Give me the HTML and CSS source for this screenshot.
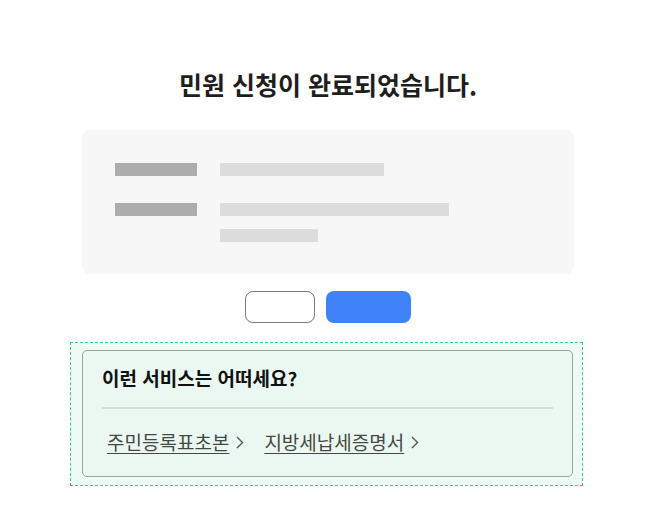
FILE: index.html
```html
<!DOCTYPE html>
<html lang="ko">
<head>
  <meta charset="UTF-8" />
  <meta name="viewport" content="width=device-width, initial-scale=1.0" />
  <title>민원 신청 완료</title>
  <link rel="stylesheet" href="styles.css">
</head>
<body>
  <div class="pagina">
    <h1 class="titulo">민원 신청이 완료되었습니다.</h1>

    <div class="resumo">
      <div class="linha">
        <span class="rotulo"></span>
        <div class="valores">
          <span class="valor v1"></span>
        </div>
      </div>
      <div class="linha">
        <span class="rotulo"></span>
        <div class="valores">
          <span class="valor v2"></span>
          <span class="valor v3"></span>
        </div>
      </div>
    </div>

    <div class="botoes">
      <button class="btn-linha"></button>
      <button class="btn-azul"></button>
    </div>

    <!-- área recomendada -->
    <div class="destaque">
      <div class="servicos">
        <h2>이런 서비스는 어떠세요?</h2>
        <div class="links">
          <a href="#">주민등록표초본</a>
          <svg class="seta" width="8" height="13" viewBox="0 0 8 13"><path d="M1 1l5.5 5.5L1 12" fill="none" stroke="#555" stroke-width="1.4"/></svg>
          <a href="#">지방세납세증명서</a>
          <svg class="seta" width="8" height="13" viewBox="0 0 8 13"><path d="M1 1l5.5 5.5L1 12" fill="none" stroke="#555" stroke-width="1.4"/></svg>
        </div>
      </div>
    </div>
  </div>
</body>
</html>
```

FILE: styles.css
```css
body {
  margin: 0;
  font-family: "Noto Sans CJK KR", "Noto Sans", sans-serif;
  background: #fff;
  color: #222;
}
.pagina {
  width: 656px;
  padding-top: 66px;
}
.titulo {
  margin: 0 0 28px;
  text-align: center;
  font-size: 25px;
  line-height: 36px;
  font-weight: 700;
  color: #1e1e1e;
}
.resumo {
  margin: 0 82px;
  height: 144px;
  box-sizing: border-box;
  background: #f7f7f7;
  border-radius: 8px;
  padding: 33px 33px 0;
  display: flex;
  flex-direction: column;
  gap: 27px;
}
.linha {
  display: flex;
  gap: 23px;
}
.rotulo {
  width: 82px;
  height: 13px;
  background: #adadad;
}
.valores {
  display: flex;
  flex-direction: column;
  gap: 13px;
}
.valor {
  display: block;
  height: 13px;
  background: #dcdcdc;
}
.v1 { width: 164px; }
.v2 { width: 229px; }
.v3 { width: 98px; }
.botoes {
  display: flex;
  justify-content: center;
  gap: 11px;
  margin: 17px 0 19px;
}
.botoes button {
  height: 32px;
  border-radius: 8px;
  cursor: pointer;
}
.btn-linha {
  width: 70px;
  background: #fff;
  border: 1px solid #7a7a7a;
}
.btn-azul {
  width: 85px;
  background: #3f83f8;
  border: none;
}
.destaque {
  margin-left: 70px;
  width: 513px;
  box-sizing: border-box;
  border: 1px dashed #2fd48c;
  background: #eefaf4;
  padding: 7px 9px 8px 11px;
}
.servicos {
  background: #eaf8f1;
  border: 1px solid #9aa5a0;
  border-radius: 5px;
  padding: 13px 19px 0;
  height: 127px;
  box-sizing: border-box;
}
.servicos h2 {
  margin: 0;
  font-size: 19px;
  line-height: 28px;
  font-weight: 700;
  color: #111;
  padding-bottom: 15px;
  border-bottom: 2px solid #d3ddd8;
}
.links {
  display: flex;
  align-items: center;
  padding: 19px 0 0 5px;
  font-size: 19px;
  line-height: 28px;
}
.links a {
  color: #434846;
  text-decoration: underline;
  text-underline-offset: 3px;
}
.seta {
  margin: 1px 20px 0 7px;
}
```
